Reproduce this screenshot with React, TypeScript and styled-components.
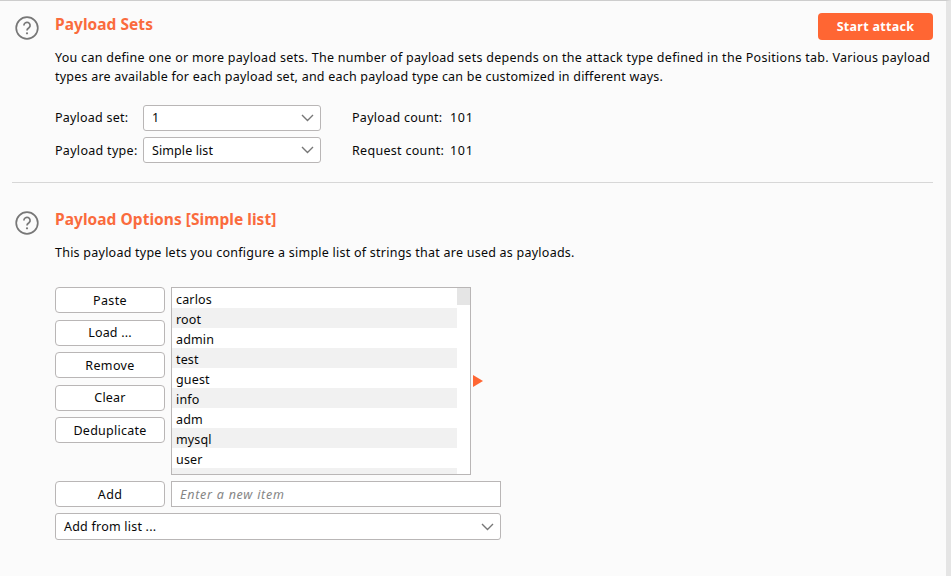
import React from "react";
import styled, { createGlobalStyle } from "styled-components";

const GlobalStyle = createGlobalStyle`
  *, *::before, *::after { box-sizing: border-box; }
  body { margin: 0; background: #fbfbfb; overflow: hidden; }
`;

const Page = styled.main`
  width: 951px;
  height: 576px;
  border-top: 1px solid #cdcdcd;
  border-right: 5px solid #e5e5e5;
  background: #fbfbfb;
  color: #080808;
  font: 12.5px/19px "Noto Sans", "Open Sans", sans-serif;
  padding: 12px 13px 0 12px;
`;

const Section = styled.section<{ $height: number; $top?: number }>`
  display: grid;
  grid-template-columns: 43px 1fr;
  align-content: start;
  height: ${(p) => p.$height}px;
  padding-top: ${(p) => p.$top ?? 0}px;
`;

const HelpIcon = styled.svg`
  display: block;
  width: 24px;
  height: 24px;
  margin: 3.4px 0 0 3.2px;
`;

const Content = styled.div`
  min-width: 0;
`;

const Header = styled.header`
  display: flex;
  justify-content: space-between;
  height: 35px;
`;

const Title = styled.h2`
  margin: 0;
  color: #fa6b3d;
  font-size: 15.5px;
  font-weight: 700;
  line-height: 23px;
  letter-spacing: 0.04px;
`;

const StartButton = styled.button`
  width: 115px;
  height: 27px;
  padding: 1px 0 0;
  border: 0;
  border-radius: 4px;
  background: #ff6633;
  color: #fff;
  font: 700 12.5px/26px "Noto Sans", sans-serif;
  letter-spacing: 0.3px;
`;

const Label = styled.span<{ $spacing?: number }>`
  display: inline-block;
  white-space: pre;
  letter-spacing: ${(p) => p.$spacing ?? 0}px;
`;

const Description = styled.p`
  margin: 0;
  display: flex;
  flex-direction: column;
  align-items: flex-start;
`;

const Fields = styled.div`
  display: grid;
  grid-template-columns: 88px 178px 31px 98px 1fr;
  margin-top: 19px;
  row-gap: 6px;
`;

const FieldRow = styled.div<{ $line: number }>`
  display: grid;
  grid-column: 1 / -1;
  grid-template-columns: subgrid;
  height: 26px;
  line-height: ${(p) => p.$line}px;
`;

const Spacer = styled.span``;

const SelectBox = styled.div<{ $height?: number }>`
  display: flex;
  justify-content: space-between;
  height: ${(p) => p.$height ?? 26}px;
  padding: 0 6px 0 8px;
  border: 1px solid #b9b6b6;
  border-radius: 3px;
  background: #fff;
`;

const SelectText = styled(Label)<{ $line: number }>`
  line-height: ${(p) => p.$line}px;
`;

const Arrow = styled.svg`
  align-self: center;
  width: 13px;
  height: 8px;
`;

const Divider = styled.hr`
  height: 1px;
  margin: 0;
  border: 0;
  background: #d7d7d7;
`;

const Editor = styled.div`
  display: grid;
  grid-template-columns: 110px 300px 1fr;
  column-gap: 6px;
  margin-top: 25px;
`;

const ButtonStack = styled.div`
  display: flex;
  flex-direction: column;
  gap: 6.5px;
`;

const Button = styled.button<{ $drop?: number }>`
  width: 110px;
  height: 26px;
  flex: none;
  padding: ${(p) => p.$drop ?? 0}px 0 0;
  border: 1px solid #b9b6b6;
  border-radius: 4px;
  background: #fff;
  color: #080808;
  font: 12.5px/24px "Noto Sans", sans-serif;
`;

const ListBox = styled.div`
  display: grid;
  grid-template-columns: 285px 13px;
  height: 188px;
  border: 1px solid #b9b6b6;
  background: #fff;
  overflow: hidden;
`;

const Rows = styled.div`
  display: flex;
  flex-direction: column;
  overflow: hidden;
`;

const Row = styled.div`
  height: 20px;
  flex: none;
  padding-left: 4px;
  line-height: 23px;
  &:nth-child(even) { background: #f1f1f1; }
`;

const Thumb = styled.div`
  height: 17px;
  background: #e5e5e5;
`;

const Marker = styled.svg`
  align-self: start;
  width: 10px;
  height: 12px;
  margin: 88px 0 0 -4px;
`;

const AddRow = styled.div`
  display: grid;
  grid-template-columns: 110px 330px;
  gap: 6px;
  margin: 6px 0;
`;

const ItemInput = styled.div`
  height: 26px;
  padding-left: 8px;
  border: 1px solid #b9b6b6;
  background: #fff;
  color: #858585;
  font-style: italic;
  line-height: 26px;
`;

const SourceSelect = styled.div`
  width: 446px;
`;

const Help = () => (
  <HelpIcon viewBox="0 0 24 24" fill="none" stroke="#777" strokeWidth="1.7">
    <circle cx="12" cy="12" r="10.8" />
    <path d="M8.9 9.5a3.1 3.1 0 1 1 5.2 2.2c-.9.8-2.1 1.1-2.1 2.7" />
    <circle cx="12" cy="17.3" r="1.1" fill="#777" stroke="none" />
  </HelpIcon>
);

type SelectProps = { text: string; spacing?: number; height?: number; line?: number };

const Select = ({ text, spacing, height, line = 24 }: SelectProps) => (
  <SelectBox $height={height}>
    <SelectText $spacing={spacing} $line={line}>{text}</SelectText>
    <Arrow viewBox="0 0 13 8" fill="none" stroke="#777" strokeWidth="1.4">
      <path d="m1 1 5.5 5.5L12 1" />
    </Arrow>
  </SelectBox>
);

const actions = [
  { text: "Paste", spacing: 0.4, drop: 1 },
  { text: "Load ...", spacing: 0.2, drop: 0 },
  { text: "Remove", spacing: 0.35, drop: 1 },
  { text: "Clear", spacing: 0.2, drop: 0 },
  { text: "Deduplicate", spacing: 0.25, drop: 1 },
];

const items = ["carlos", "root", "admin", "test", "guest", "info", "adm", "mysql", "user", ""];

export default function App() {
  return (
    <>
      <GlobalStyle />
      <Page>
        <Section $height={169}>
          <Help />
          <Content>
            <Header>
              <Title>Payload Sets</Title>
              <StartButton>Start attack</StartButton>
            </Header>
            <Description>
              <Label $spacing={0.28}>You can define one or more payload sets. The number of payload sets depends on the attack type defined in the Positions tab. Various payload</Label>
              <Label $spacing={0.22}>types are available for each payload set, and each payload type can be customized in different ways.</Label>
            </Description>
            <Fields>
              <FieldRow $line={25}>
                <Label $spacing={0.22}>Payload set:</Label>
                <Select text="1" line={24} />
                <Spacer />
                <Label $spacing={0.28}>Payload count:</Label>
                <Label $spacing={0.7}>101</Label>
              </FieldRow>
              <FieldRow $line={27}>
                <Label $spacing={0.3}>Payload type:</Label>
                <Select text="Simple list" spacing={0.1} line={26} />
                <Spacer />
                <Label $spacing={0.3}>Request count:</Label>
                <Label $spacing={0.7}>101</Label>
              </FieldRow>
            </Fields>
          </Content>
        </Section>
        <Divider />
        <Section $height={380} $top={25}>
          <Help />
          <Content>
            <Header>
              <Title>Payload Options [Simple list]</Title>
            </Header>
            <Description>
              <Label $spacing={0.24}>This payload type lets you configure a simple list of strings that are used as payloads.</Label>
            </Description>
            <Editor>
              <ButtonStack>
                {actions.map(({ text, spacing, drop }) => (
                  <Button key={text} $drop={drop}><Label $spacing={spacing}>{text}</Label></Button>
                ))}
              </ButtonStack>
              <ListBox>
                <Rows>
                  {items.map((text) => (
                    <Row key={text}><Label $spacing={0.15}>{text}</Label></Row>
                  ))}
                </Rows>
                <Thumb />
              </ListBox>
              <Marker viewBox="0 0 10 12"><path d="M0 0 10 6 0 12Z" fill="#ff6633" /></Marker>
            </Editor>
            <AddRow>
              <Button $drop={1}><Label $spacing={0.3}>Add</Label></Button>
              <ItemInput><Label $spacing={0.75}>Enter a new item</Label></ItemInput>
            </AddRow>
            <SourceSelect>
              <Select text="Add from list ..." spacing={0.22} height={27} line={25} />
            </SourceSelect>
          </Content>
        </Section>
      </Page>
    </>
  );
}
